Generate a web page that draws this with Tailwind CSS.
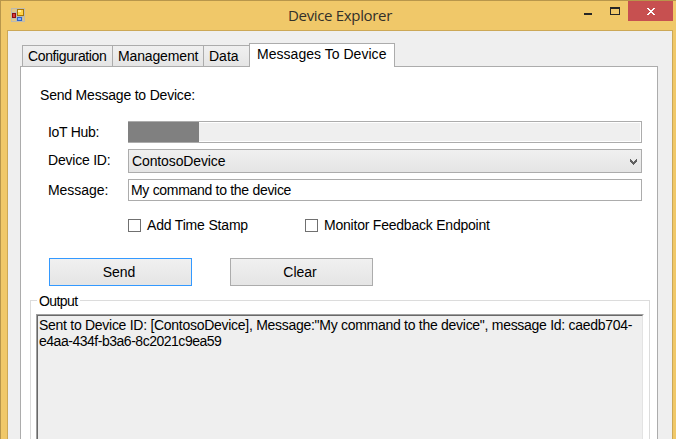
<!DOCTYPE html>
<html lang="en">
<head>
<meta charset="utf-8">
<title>Device Explorer</title>
<script src="https://cdn.jsdelivr.net/npm/@tailwindcss/browser@4"></script>
</head>
<body class="overflow-hidden">
<div class="flex h-[439px] w-[676px] flex-col overflow-hidden border-t border-l border-[#b8964b] bg-[#f0c869] font-['Liberation_Sans',Arial,sans-serif] text-[14px] leading-4 whitespace-nowrap text-black">
  <!-- Title bar -->
  <header class="relative flex h-[29px] shrink-0 items-start justify-end pr-[3px]">
    <svg class="absolute top-[7px] left-[10px]" width="14" height="14" viewBox="0 0 14 14" shape-rendering="crispEdges">
      <path d="M0 0H14V14H0Z" fill="#bdbab0"/>
      <path d="M1 1H5V4H1ZM1 11H5V13H1ZM12 9H13V13H12Z" fill="#e0c684"/>
      <rect x="1" y="5" width="4" height="5" fill="#8c0d12"/><rect x="2" y="6" width="2" height="3" fill="#d83a3c"/>
      <rect x="6" y="1" width="7" height="7" fill="#a87400"/><rect x="7" y="2" width="5" height="5" fill="#ffd34a"/><rect x="7" y="2" width="3" height="2" fill="#ffec9c"/>
      <rect x="6" y="9" width="5" height="4" fill="#2f63c8"/><rect x="7" y="10" width="3" height="2" fill="#7fb0ff"/>
    </svg>
    <h1 class="absolute top-[4px] left-[287px] font-['Open_Sans',sans-serif] text-[15px] leading-5 tracking-[-0.33px] text-[#33302a]">Device Explorer</h1>
    <svg width="45" height="20" viewBox="0 0 45 20" shape-rendering="crispEdges"><rect x="1" y="12" width="8" height="2" fill="#262626"/><path d="M27 6H37V14H27ZM28 8V13H36V8Z" fill="#262626" fill-rule="evenodd"/></svg>
    <svg class="bg-[#c75050]" width="45" height="20" viewBox="0 0 45 20" shape-rendering="crispEdges"><path d="M19 7h2v1h1v1h2v-1h1v-1h2v1h-1v1h-1v1h-1v1h1v1h1v1h1v1h-2v-1h-1v-1h-2v1h-1v1h-2v-1h1v-1h1v-1h1v-1h-1v-1h-1v-1h-1z" fill="#fff"/></svg>
  </header>

  <!-- Client area -->
  <main class="ml-[6px] flex w-[666px] grow flex-col border-x border-t border-[#cca856] bg-[#efefef] pr-[14px] pl-[12px]">
    <nav class="relative z-10 mt-[12px] -mb-px flex h-[24px] items-end pl-[2px]">
      <div class="flex h-[22px] w-[91px] border border-[#acacac] bg-linear-to-b from-[#f0f0f0] to-[#e5e5e5] pt-[2px] pl-[5px] tracking-[-0.38px]">Configuration</div>
      <div class="-ml-px flex h-[22px] w-[92px] border border-[#acacac] bg-linear-to-b from-[#f0f0f0] to-[#e5e5e5] pt-[2px] pl-[5px] tracking-[-0.14px]">Management</div>
      <div class="-ml-px flex h-[22px] w-[47px] border border-[#acacac] bg-linear-to-b from-[#f0f0f0] to-[#e5e5e5] pt-[2px] pl-[5px]">Data</div>
      <div class="-ml-px flex h-[24px] w-[146px] border border-b-0 border-[#acacac] bg-white pt-[2px] pl-[7px] tracking-[0.03px]">Messages To Device</div>
    </nav>

    <section class="flex w-[638px] grow flex-col border border-b-0 border-[#acacac] bg-white">
      <p class="mt-[20px] ml-[19px] tracking-[-0.2px]">Send Message to Device:</p>
      <div class="mt-[18px] ml-[27px] flex h-[22px]">
        <span class="w-[80px] pt-[3px] tracking-[-0.3px]">IoT Hub:</span>
        <div class="w-[514px] border border-l-0 border-[#acacac] bg-[#efefef] shadow-[inset_0_0_0_1px_#fff]"><div class="h-full w-[71px] bg-[#808080]"></div></div>
      </div>
      <div class="mt-[6px] ml-[27px] flex h-[24px]">
        <span class="w-[80px] pt-[3px] tracking-[-0.22px]">Device ID:</span>
        <div class="flex w-[514px] justify-between border border-[#acacac] bg-linear-to-b from-[#f0f0f0] to-[#e5e5e5] pt-[3px] pr-[4px] pl-[3px] tracking-[-0.12px]">ContosoDevice
          <svg class="mt-[6px]" width="7" height="6" viewBox="0 0 7 6" shape-rendering="crispEdges"><path d="M0 0h1v1h1v1h1v1h1v-1h1v-1h1v-1h1v3h-1v1h-1v1h-1v1h-1v-1h-1v-1h-1v-1h-1z" fill="#606060"/></svg>
        </div>
      </div>
      <div class="mt-[6px] ml-[27px] flex h-[22px]">
        <span class="w-[80px] pt-[3px] tracking-[-0.06px]">Message:</span>
        <div class="w-[514px] border border-[#acacac] bg-white pt-[2px] pl-[2px] tracking-[-0.3px]">My command to the device</div>
      </div>
      <div class="mt-[16px] ml-[107px] flex h-[17px]">
        <label class="flex w-[177px]"><span class="mt-[2px] mr-[6px] size-[13px] border border-[#707070]"></span><span class="tracking-[-0.18px]">Add Time Stamp</span></label>
        <label class="flex"><span class="mt-[2px] mr-[6px] size-[13px] border border-[#707070]"></span><span class="tracking-[-0.22px]">Monitor Feedback Endpoint</span></label>
      </div>
      <div class="mt-[24px] ml-[28px] flex h-[28px] gap-[38px]">
        <button class="w-[143px] border border-[#3399ff] bg-linear-to-b from-[#f0f0f0] to-[#e5e5e5] pr-[3px]">Send</button>
        <button class="w-[143px] border border-[#acacac] bg-linear-to-b from-[#f0f0f0] to-[#e5e5e5] pr-[3px]">Clear</button>
      </div>
      <div class="relative mt-[14px] ml-[9px] flex w-[620px] grow flex-col border border-b-0 border-[#dcdcdc] pt-[13px] pl-[5px]">
        <span class="absolute -top-[8px] left-[6px] bg-white pr-[3px] pl-[2px] tracking-[-0.6px]">Output</span>
        <div class="w-[608px] grow border-t border-r border-l border-t-[#a0a0a0] border-r-white border-l-[#a0a0a0]">
          <div class="h-full border-t border-r border-l border-t-[#696969] border-r-[#e3e3e3] border-l-[#696969] bg-[#efefef] pt-px pl-px">
            <p class="tracking-[-0.28px]">Sent to Device ID: [ContosoDevice], Message:"My command to the device", message Id: caedb704-</p>
            <p class="tracking-[-0.48px]">e4aa-434f-b3a6-8c2021c9ea59</p>
          </div>
        </div>
      </div>
    </section>
  </main>
</div>
</body>
</html>
